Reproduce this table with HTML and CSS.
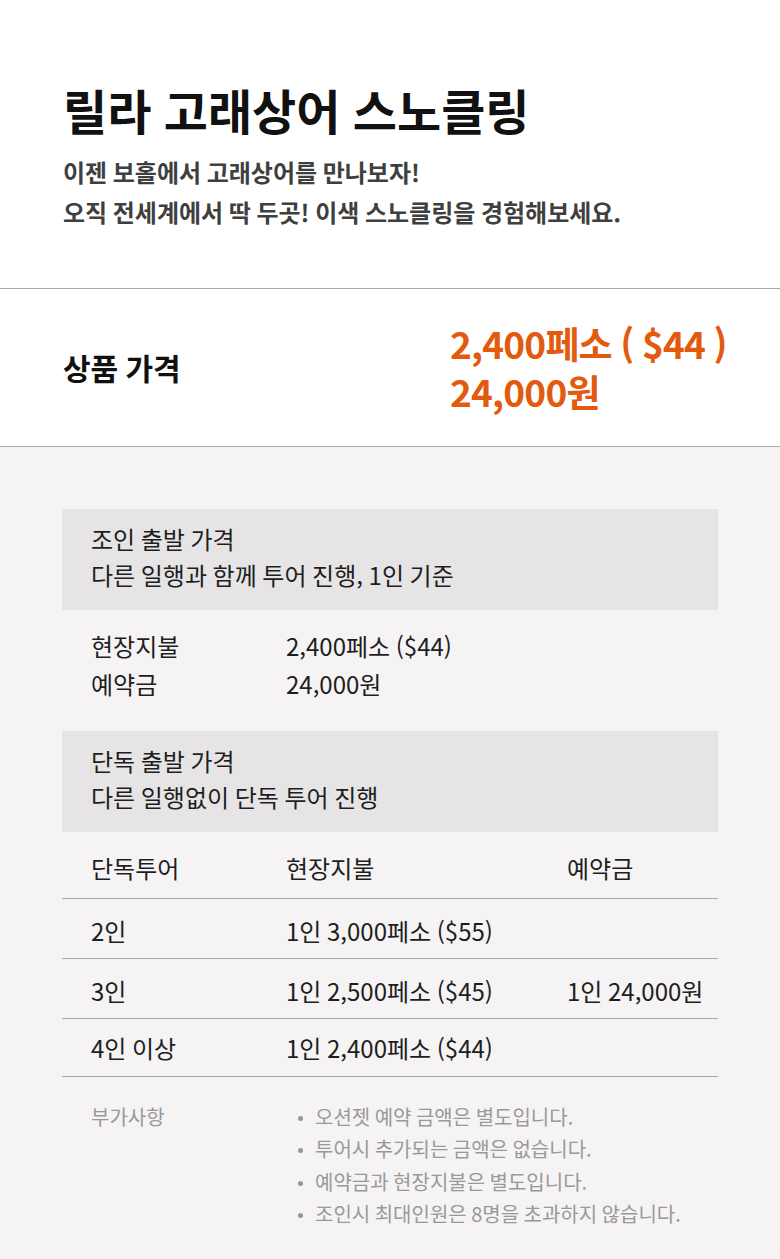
FILE: index.html
```html
<!DOCTYPE html>
<html lang="ko">
<head>
<meta charset="utf-8">
<title>릴라 고래상어 스노클링</title>
<link rel="stylesheet" href="styles.css">
</head>
<body>
<header class="intro">
  <h1 class="title">릴라 고래상어 스노클링</h1>
  <p class="subtitle">이젠 보홀에서 고래상어를 만나보자!<br>오직 전세계에서 딱 두곳! 이색 스노클링을 경험해보세요.</p>
</header>

<section class="price">
  <div class="price-label">상품 가격</div>
  <div class="price-value">
    <div>2,400페소 ( $44 )</div>
    <div>24,000원</div>
  </div>
</section>

<section class="details">
  <div class="box">
    <div>조인 출발 가격</div>
    <div>다른 일행과 함께 투어 진행, 1인 기준</div>
  </div>
  <dl class="info">
    <dt>현장지불</dt><dd>2,400페소 ($44)</dd>
    <dt>예약금</dt><dd>24,000원</dd>
  </dl>

  <div class="box">
    <div>단독 출발 가격</div>
    <div>다른 일행없이 단독 투어 진행</div>
  </div>
  <table class="solo">
    <thead>
      <tr class="head"><th>단독투어</th><th>현장지불</th><th>예약금</th></tr>
    </thead>
    <tbody>
      <tr class="r1"><td>2인</td><td>1인 3,000페소 ($55)</td><td></td></tr>
      <tr class="r2"><td>3인</td><td>1인 2,500페소 ($45)</td><td>1인 24,000원</td></tr>
      <tr class="r3"><td>4인 이상</td><td>1인 2,400페소 ($44)</td><td></td></tr>
    </tbody>
  </table>

  <div class="notes">
    <div class="notes-label">부가사항</div>
    <ul class="notes-list">
      <li>오션젯 예약 금액은 별도입니다.</li>
      <li>투어시 추가되는 금액은 없습니다.</li>
      <li>예약금과 현장지불은 별도입니다.</li>
      <li>조인시 최대인원은 8명을 초과하지 않습니다.</li>
    </ul>
  </div>
</section>
</body>
</html>
```

FILE: styles.css
```css
* { box-sizing: border-box; }
html, body { margin: 0; padding: 0; }
body {
  width: 780px;
  font-family: "Noto Sans CJK KR", "Noto Sans", sans-serif;
  color: #1e1e1e;
  background: #ffffff;
  word-spacing: -0.07em;
}

.intro {
  padding: 81px 0 56px 63px;
  border-bottom: 1px solid #a9a9a9;
}
.title {
  margin: 0;
  font-size: 48px;
  line-height: 56px;
  font-weight: 700;
  color: #111;
  word-spacing: -1px;
}
.subtitle {
  margin: 15px 0 0;
  font-size: 24px;
  line-height: 40px;
  font-weight: 700;
  color: #3f3f3f;
}

.price {
  display: grid;
  grid-template-columns: 387px 1fr;
  align-items: center;
  padding: 30px 0 31px 63px;
  border-bottom: 1px solid #a9a9a9;
}
.price-label {
  font-size: 30px;
  font-weight: 700;
  color: #111;
}
.price-value {
  font-size: 37px;
  line-height: 48px;
  font-weight: 700;
  color: #e35a0f;
  letter-spacing: -0.8px;
}

.details {
  background: #f5f3f4;
  padding: 62px 62px 29px;
}
.box {
  background: #e6e4e5;
  padding: 12px 29px 17px;
  font-size: 24px;
  line-height: 36px;
}
.info {
  display: grid;
  grid-template-columns: 195px 1fr;
  margin: 17px 0 28px;
  padding-left: 29px;
  font-size: 24px;
  line-height: 38px;
}
.info dt, .info dd { margin: 0; }

.solo {
  width: 100%;
  border-collapse: collapse;
  font-size: 24px;
  line-height: 36px;
  table-layout: fixed;
}
.solo th {
  font-weight: 400;
  text-align: left;
}
.solo th, .solo td {
  padding: 0;
  vertical-align: top;
}
.solo tr { border-bottom: 1px solid #a9a9a9; }
.solo th:nth-child(1), .solo td:nth-child(1) { width: 224px; padding-left: 29px; }
.solo th:nth-child(2), .solo td:nth-child(2) { width: 281px; }
.solo .head th { padding-top: 18px; padding-bottom: 12px; }
.solo .r1 td, .solo .r2 td { padding-top: 14px; padding-bottom: 9px; }
.solo .r3 td { padding-top: 11px; padding-bottom: 10px; }

.notes {
  display: grid;
  grid-template-columns: 224px 1fr;
  margin-top: 24px;
  padding-left: 29px;
  font-size: 20px;
  line-height: 32.3px;
  color: #999;
}
.notes-list {
  margin: 0;
  padding: 0;
  list-style: none;
}
.notes-list li { position: relative; }
.notes-list li::before {
  content: "";
  position: absolute;
  left: -17px;
  top: 15px;
  width: 5px;
  height: 5px;
  border-radius: 50%;
  background: #999;
}
```
